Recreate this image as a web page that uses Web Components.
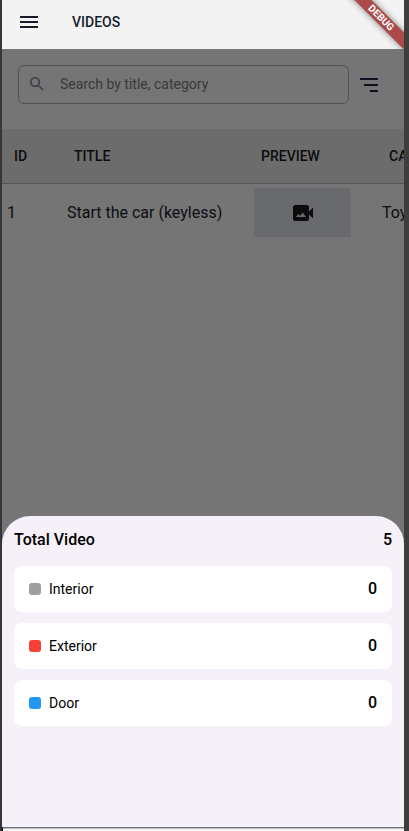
<!DOCTYPE html>
<html lang="en">
<head>
<meta charset="utf-8">
<meta name="viewport" content="width=device-width, initial-scale=1">
<title>Videos</title>
<style>
html, body { height: 100%; margin: 0; }
body { background: #3e3e3e; font-family: Roboto, "Noto Sans", sans-serif; }
</style>
</head>
<body>
<video-app>
  <app-header slot="header">VIDEOS</app-header>
  <search-bar></search-bar>
  <video-table></video-table>
  <total-sheet slot="sheet" label="Total Video" count="5">
    <category-card count="0" style="--swatch:#9e9e9e">Interior</category-card>
    <category-card count="0" style="--swatch:#f44336">Exterior</category-card>
    <category-card count="0" style="--swatch:#2196f3">Door</category-card>
  </total-sheet>
</video-app>
<script>
const define = (name, html, setup) => {
  const template = document.createElement('template');
  template.innerHTML = '<style>*{box-sizing:border-box}button{border:0;padding:0;background:none;color:inherit;font:inherit;cursor:pointer}svg{display:block}</style>' + html;
  customElements.define(name, class extends HTMLElement {
    constructor() {
      super();
      this.attachShadow({ mode: 'open' }).append(template.content.cloneNode(true));
    }
    connectedCallback() { if (setup) setup(this, this.shadowRoot); }
  });
};

define('video-app', `
<style>
:host { display: flex; flex-direction: column; height: 100%; min-height: 100vh; box-sizing: border-box; border-left: 2px solid #343638; border-right: 5px solid #3e3e3e; overflow: hidden; }
main { position: relative; flex: 1; display: flex; flex-direction: column; background: #fff; overflow: hidden; }
.overlay { position: absolute; inset: 0; display: flex; flex-direction: column; justify-content: flex-end; background: rgba(0,0,0,.54); }
::slotted(total-sheet) { min-height: 40%; }
footer { height: 4px; box-sizing: border-box; border-top: 1px solid #707070; border-left: 1px solid #000; background: linear-gradient(#c4c4c4 1px, #f4f4f4 1px); }
</style>
<slot name="header"></slot>
<main><slot></slot><div class="overlay"><slot name="sheet"></slot></div></main>
<footer></footer>`);

define('app-header', `
<style>
:host { position: relative; display: flex; align-items: center; height: 49px; padding: 0 15px 5px; gap: 31px; box-sizing: border-box; background: #f3f3f3; color: #141c2e; overflow: hidden; }
h1 { margin: 0; font-size: 14px; line-height: 20px; font-weight: 500; }
</style>
<button aria-label="Open menu"><svg width="24" height="24" viewBox="0 0 24 24" fill="currentColor"><path d="M3 18h18v-2H3v2zm0-5h18v-2H3v2zm0-7v2h18V6H3z"/></svg></button>
<h1><slot></slot></h1>
<debug-ribbon></debug-ribbon>`);

define('debug-ribbon', `
<style>
:host { position: absolute; top: 12px; right: -17px; width: 80px; height: 12px; transform: rotate(45deg); background: #ac4949; color: #fff; font-size: 10px; line-height: 12px; font-weight: 700; text-align: center; box-shadow: 0 0 6px rgba(0,0,0,.5); }
</style>DEBUG`);

define('search-bar', `
<style>
:host { display: flex; align-items: center; gap: 8px; padding: 16px 23px 25px 16px; }
form { flex: 1; min-width: 0; display: flex; align-items: center; gap: 16px; height: 39px; padding: 0 11px 2px; border: 1px solid #b0b0b0; border-radius: 6px; color: #7c8aa3; }
input { flex: 1; min-width: 0; padding: 0; border: 0; outline: 0; background: none; font: 400 14px/20px Roboto, sans-serif; color: #222; }
input::placeholder { color: #7c7c7c; opacity: 1; }
button { color: #17294b; }
</style>
<form role="search">
<svg width="14" height="14" viewBox="3 3 18 18" fill="currentColor" aria-hidden="true"><path d="M15.5 14h-.79l-.28-.27C15.41 12.59 16 11.11 16 9.5 16 5.91 13.09 3 9.5 3S3 5.91 3 9.5 5.91 16 9.5 16c1.61 0 3.09-.59 4.23-1.57l.27.28v.79l5 4.99L20.49 19l-4.99-5zm-6 0C7.01 14 5 11.99 5 9.5S7.01 5 9.5 5 14 7.01 14 9.5 11.99 14 9.5 14z"/></svg>
<input type="search" aria-label="Search by title, category" placeholder="Search by title, category">
</form>
<button aria-label="Filter"><svg width="24" height="24" viewBox="0 0 24 24" fill="none" stroke="currentColor" stroke-width="2"><path d="M3 6h18M7 12h14M13 18h8"/></svg></button>`);

define('video-table', `
<style>
:host { display: block; overflow: hidden; color: #1c1c2e; }
table { width: 525px; table-layout: fixed; border-collapse: separate; border-spacing: 0; }
th { height: 55px; padding: 0 12px; background: #ebebeb; border-bottom: 1px solid #b8b8b8; font-size: 14px; line-height: 20px; font-weight: 500; text-align: left; color: #1c1c1c; }
td { padding: 4px 5px; font-size: 16px; line-height: 20px; white-space: nowrap; }
.id { width: 60px; } .title { width: 187px; } .preview { width: 128px; }
td button { display: flex; align-items: center; justify-content: center; width: 97px; height: 49px; background: #e3e8ee; color: #1c1c1c; }
</style>
<table>
<thead><tr><th class="id">ID</th><th class="title">TITLE</th><th class="preview">PREVIEW</th><th>CATEGORY</th></tr></thead>
<tbody><tr><td>1</td><td>Start the car (keyless)</td><td><button aria-label="Preview video"><svg width="24" height="24" viewBox="0 0 24 24" fill="currentColor"><path fill-rule="evenodd" d="M18 10.48V6c0-1.1-.9-2-2-2H4c-1.1 0-2 .9-2 2v12c0 1.1.9 2 2 2h12c1.1 0 2-.9 2-2v-4.48l4 3.98v-11l-4 3.98zM5 16l2.38-3.17L9 15l2.62-3.5L15 16H5z"/></svg></button></td><td>Toyota</td></tr></tbody>
</table>`);

define('total-sheet', `
<style>
:host { display: flex; flex-direction: column; gap: 11px; box-sizing: border-box; padding: 12px; border-radius: 28px 28px 0 0; background: #f6f1f9; color: #000; }
header { display: flex; justify-content: space-between; padding: 0 0 3px; font-size: 16px; line-height: 24px; font-weight: 500; }
h2 { margin: 0; font: inherit; }
</style>
<header><h2></h2><span></span></header>
<slot></slot>`, (el, root) => {
  root.querySelector('h2').textContent = el.getAttribute('label');
  root.querySelector('span').textContent = el.getAttribute('count');
});

define('category-card', `
<style>
:host { display: flex; align-items: center; gap: 8px; height: 46px; padding: 0 15px; box-sizing: border-box; border-radius: 8px; background: #fff; font-size: 14px; line-height: 20px; }
i { width: 12px; height: 12px; border-radius: 3px; background: var(--swatch); }
.name { flex: 1; }
.count { font-size: 16px; font-weight: 500; }
</style>
<i></i><span class="name"><slot></slot></span><span class="count"></span>`, (el, root) => {
  root.querySelector('.count').textContent = el.getAttribute('count');
});
</script>
</body>
</html>
